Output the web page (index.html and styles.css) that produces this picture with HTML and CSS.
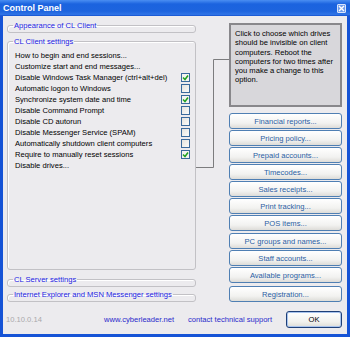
FILE: index.html
```html
<!DOCTYPE html>
<html lang="en">
<head>
    <meta charset="UTF-8">
    <title>Control Panel</title>
    <link rel="stylesheet" href="styles.css">
</head>
<body>

<div class="window">
    <div class="titlebar">
        <span class="title">Control Panel</span>
        <span class="close">
            <svg width="7" height="7" viewBox="0 0 7 7"><path d="M1 1L6 6M6 1L1 6" stroke="#fff" stroke-width="1.4"/></svg>
        </span>
    </div>

    <div class="panel">
        <div class="content">
            <!-- Left: settings groups -->
            <div class="left">
                <fieldset class="group collapsed">
                    <legend>Appearance of CL Client</legend>
                </fieldset>

                <fieldset class="group main">
                    <legend>CL Client settings</legend>
                    <ul class="options">
                        <li>How to begin and end sessions...</li>
                        <li>Customize start and end messages...</li>
                        <li>Disable Windows Task Manager (ctrl+alt+del) <span class="check on"></span></li>
                        <li>Automatic logon to Windows <span class="check"></span></li>
                        <li>Synchronize system date and time <span class="check on"></span></li>
                        <li>Disable Command Prompt <span class="check"></span></li>
                        <li>Disable CD autorun <span class="check"></span></li>
                        <li>Disable Messenger Service (SPAM) <span class="check"></span></li>
                        <li>Automatically shutdown client computers <span class="check"></span></li>
                        <li>Require to manually reset sessions <span class="check on"></span></li>
                        <li>Disable drives...</li>
                    </ul>
                </fieldset>

                <fieldset class="group collapsed server">
                    <legend>CL Server settings</legend>
                </fieldset>

                <fieldset class="group collapsed browser">
                    <legend>Internet Explorer and MSN Messenger settings</legend>
                </fieldset>
            </div>

            <!-- Right: hint and buttons -->
            <div class="right">
                <div class="hint">
                    Click to choose which drives<br>
                    should be invisible on client<br>
                    computers. Reboot the<br>
                    computers for two times after<br>
                    you make a change to this<br>
                    option.
                </div>

                <div class="btns">
                    <button class="btn">Financial reports...</button>
                    <button class="btn">Pricing policy...</button>
                    <button class="btn">Prepaid accounts...</button>
                    <button class="btn">Timecodes...</button>
                    <button class="btn">Sales receipts...</button>
                    <button class="btn">Print tracking...</button>
                    <button class="btn">POS items...</button>
                </div>
                <div class="btns second">
                    <button class="btn">PC groups and names...</button>
                    <button class="btn">Staff accounts...</button>
                    <button class="btn">Available programs...</button>
                </div>
                <div class="btns third">
                    <button class="btn">Registration...</button>
                </div>
            </div>

            <!-- line from "Disable drives..." to the hint box -->
            <svg class="connector" width="34" height="110" viewBox="0 0 34 110">
                <path d="M0 108.5H17.5V0.5H33" fill="none" stroke="#7c7c7e" stroke-width="1"/>
            </svg>
        </div>

        <div class="footer">
            <span class="version">10.10.0.14</span>
            <span class="link">www.cyberleader.net</span>
            <span class="link">contact technical support</span>
            <button class="ok">OK</button>
        </div>
    </div>
</div>

</body>
</html>
```

FILE: styles.css
```css
body {
    margin: 0;
    font-family: 'Liberation Sans', Tahoma, sans-serif;
    font-size: 7.6px;
    color: #000;
}
.window {
    width: 350px;
    height: 337px;
    box-sizing: border-box;
    background: #1553d6;
    padding: 0 3px 3px;
    display: flex;
    flex-direction: column;
}
.titlebar {
    height: 16px;
    margin: 0 -3px;
    padding: 0 4px 0 3px;
    display: flex;
    align-items: center;
    justify-content: space-between;
    background: linear-gradient(#4a8ef2, #1b63df 25%, #1d64de 70%, #2f74e6 90%, #1250cf);
}
.title {
    color: #fff;
    font-weight: bold;
    font-size: 9px;
}
.close {
    width: 9px;
    height: 9px;
    box-sizing: border-box;
    border: 1px solid #d8e4fb;
    border-radius: 1px;
    background: #6f9cec;
    display: flex;
    align-items: center;
    justify-content: center;
}
.close svg {
    display: block;
}
.panel {
    flex: 1;
    background: #ecebee;
    display: flex;
    flex-direction: column;
}
.content {
    position: relative;
    display: grid;
    grid-template-columns: 189px 113px;
    column-gap: 33px;
    padding: 7px 5px 0 4px;
}
.left {
    margin-top: -2px;
    display: flex;
    flex-direction: column;
}
.group {
    margin: 0;
    padding: 0 0 2px;
    min-width: 0;
    border: 1px solid #c2c1c5;
    border-radius: 3px;
    box-shadow: inset 1px 1px 0 #fff;
}
.group legend {
    margin-left: 5px;
    padding: 0 1px;
    line-height: 9px;
    color: #2323e4;
}
.main {
    flex: 1;
    margin-top: 4px;
}
.server {
    margin-top: 5px;
}
.browser {
    margin-top: 3px;
}
.options {
    list-style: none;
    margin: 0;
    padding: 4px 5px 0 7px;
}
.options li {
    height: 11px;
    display: flex;
    align-items: center;
    justify-content: space-between;
    white-space: nowrap;
}
.check {
    width: 9px;
    height: 9px;
    box-sizing: border-box;
    border: 1px solid #3a6a9c;
    background: linear-gradient(135deg, #e4e3de, #fbfbf9);
}
.check.on {
    background: #f4f4f0 url("data:image/svg+xml;utf8,<svg xmlns='http://www.w3.org/2000/svg' width='7' height='7'><path d='M1 3.5L3 5.5L6 1.5' fill='none' stroke='%2321a121' stroke-width='1.5'/></svg>") center no-repeat;
}
.hint {
    height: 84px;
    box-sizing: border-box;
    border: 2px solid #88878b;
    background: #d8d7db;
    padding: 4px 2px 0 4px;
    line-height: 9.3px;
    white-space: nowrap;
}
.btns {
    display: flex;
    flex-direction: column;
    gap: 1px;
    margin-top: 6px;
}
.btns.second {
    margin-top: 2px;
}
.btns.third {
    margin-top: 3px;
}
.btn {
    height: 16px;
    box-sizing: border-box;
    margin: 0;
    padding: 0;
    font: inherit;
    color: #2b5ea3;
    border: 1px solid #4f7fb3;
    border-radius: 3px;
    background: linear-gradient(#ffffff, #f2f2f0 65%, #dddcd8);
}
.connector {
    position: absolute;
    left: 193px;
    top: 43px;
}
.footer {
    display: grid;
    grid-template-columns: 98px 84px 98px 56px;
    align-items: center;
    padding: 9px 0 0 3px;
}
.version {
    color: #a9a8ab;
}
.link {
    color: #2a2acb;
}
.ok {
    height: 17px;
    margin: 0;
    padding: 0;
    font: inherit;
    color: #000;
    border: 1px solid #1e3f78;
    border-radius: 3px;
    box-shadow: inset 0 0 0 1px #a9c4ee;
    background: linear-gradient(#ffffff, #f1f1ee 65%, #dddcd7);
}
```
